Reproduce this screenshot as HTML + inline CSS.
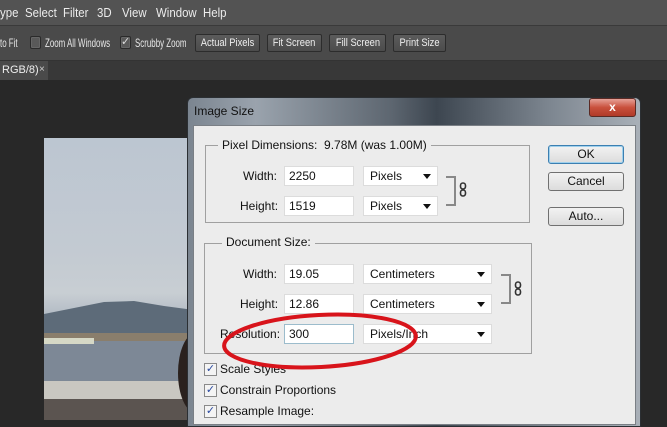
<!DOCTYPE html>
<html><head><meta charset="utf-8">
<style>
*{margin:0;padding:0;box-sizing:border-box}
body{width:667px;height:420px;overflow:hidden;background:#282828;position:relative;font-family:"Liberation Sans",sans-serif}
.a{position:absolute}
.menu{left:0;top:0;width:667px;height:26px;background:#535353;border-bottom:1px solid #3a3a3a}
.menu span{position:absolute;top:5px;color:#ececec;font-size:13px;transform:scaleX(.88);transform-origin:left}
.tool{left:0;top:26px;width:667px;height:35px;background:#4a4a4a;border-bottom:1px solid #333}
.tt{color:#e6e6e6;font-size:12px;position:absolute;top:10px;transform:scaleX(.66);transform-origin:left;white-space:nowrap}
.cb{position:absolute;top:10px;width:11px;height:13px;border:1px solid #2a2a2a;background:#595959;border-radius:2px;box-shadow:0 0 0 1px #666 inset}
.btn{position:absolute;top:8px;height:18px;border:1px solid #2c2c2c;border-radius:2px;background:linear-gradient(#5c5c5c,#4c4c4c);color:#eee;font-size:11px;text-align:center;line-height:16px;white-space:nowrap;overflow:hidden}
.btn i{font-style:normal;display:inline-block;transform:scaleX(.85)}
.tabs{left:0;top:61px;width:667px;height:19px;background:#383838}
.tab{left:0;top:61px;width:48px;height:19px;background:#4a4a4a;color:#eee;font-size:11px;padding:3px 0 0 2px}
.photo{left:44px;top:138px;width:150px;height:282px;background:linear-gradient(#bcc6d1 0%,#c3cad2 40%,#c8ced3 55%,#aab4bf 66%)}
.dlg{left:187px;top:97px;width:454px;height:330px;border-radius:6px 6px 0 0;background:linear-gradient(90deg,#7b8590 0%,#9aa3ad 15%,#5d6670 45%,#3d4650 55%,#7d8690 80%,#a9b0b8 100%);border:1px solid #2b2f33}
.client{left:193px;top:125px;width:443px;height:300px;background:#ececec;border:1px solid #7a7f85}
.l{position:absolute;font-size:12px;color:#111}
.grp{position:absolute;border:1px solid #a0a0a0}
.in{position:absolute;height:20px;background:#fff;border:1px solid #dcdcdc;font-size:12px;padding:2px 0 0 4px;color:#111}
.dd{position:absolute;height:20px;background:#fff;border:1px solid #dcdcdc;font-size:12px;padding:2px 0 0 6px;color:#111}
.dd:after{content:"";position:absolute;right:6px;top:7px;border:4px solid transparent;border-top:5px solid #111}
.br{position:absolute;width:10px;border:2px solid #888;border-left:none}
.wb{position:absolute;left:548px;width:76px;height:19px;border:1px solid #707070;border-radius:3px;background:linear-gradient(#f2f2f2,#dcdcdc);font-size:12px;text-align:center;line-height:17px;color:#111}
.ck{position:absolute;left:204px;width:13px;height:13px;border:1px solid #8a8a8a;background:#f4f4f4;color:#2b4aa0;font-size:11px;line-height:11px;text-align:center}
</style></head><body>
<div class="a menu">
<span style="left:0">ype</span><span style="left:25px">Select</span><span style="left:63px">Filter</span><span style="left:97px">3D</span><span style="left:122px">View</span><span style="left:156px">Window</span><span style="left:203px">Help</span>
</div>
<div class="a tool">
<span class="tt" style="left:0">to Fit</span>
<div class="cb" style="left:30px"></div><span class="tt" style="left:45px">Zoom All Windows</span>
<div class="cb" style="left:120px;color:#ddd;font-size:11px;line-height:11px;text-align:center">✓</div><span class="tt" style="left:135px">Scrubby Zoom</span>
<div class="btn" style="left:195px;width:65px"><i>Actual Pixels</i></div>
<div class="btn" style="left:267px;width:55px"><i>Fit Screen</i></div>
<div class="btn" style="left:329px;width:57px"><i>Fill Screen</i></div>
<div class="btn" style="left:393px;width:53px"><i>Print Size</i></div>
</div>
<div class="a tabs"></div>
<div class="a tab">RGB/8) <span style="position:absolute;left:39px;font-size:10px;color:#ccc;top:3px">×</span></div>
<div class="a photo">
<svg width="150" height="282" style="position:absolute;left:0;top:0">
<path d="M0 176 L30 170 L60 164 L90 163 L120 168 L150 172 L150 196 L0 196Z" fill="#5d6b79"/>
<rect x="0" y="195" width="150" height="8" fill="#8a7e6c"/>
<rect x="0" y="203" width="150" height="40" fill="#7d8896"/>
<rect x="0" y="200" width="50" height="6" fill="#d6d8c6"/>
<rect x="0" y="243" width="150" height="18" fill="#c9c7c1"/>
<rect x="0" y="261" width="150" height="21" fill="#5b5450"/>
<ellipse cx="152" cy="235" rx="18" ry="40" fill="#2a211e"/>
</svg>
</div>
<div class="a dlg"></div>
<div class="a" style="left:194px;top:104px;font-size:12px;color:#111">Image Size</div>
<div class="a" style="left:589px;top:98px;width:47px;height:19px;border:1px solid #5a2a24;border-radius:3px;background:linear-gradient(#e6a197,#c9503c 50%,#b03a28);color:#fff;font-weight:bold;font-size:12px;text-align:center;line-height:17px">x</div>
<div class="a client"></div>

<div class="grp" style="left:205px;top:145px;width:325px;height:78px"></div>
<div class="l" style="left:218px;top:138px;background:#ececec;padding:0 4px">Pixel Dimensions:&nbsp; 9.78M (was 1.00M)</div>
<div class="l" style="left:243px;top:169px">Width:</div>
<div class="in" style="left:284px;top:166px;width:70px">2250</div>
<div class="dd" style="left:363px;top:166px;width:75px">Pixels</div>
<div class="l" style="left:240px;top:199px">Height:</div>
<div class="in" style="left:284px;top:196px;width:70px">1519</div>
<div class="dd" style="left:363px;top:196px;width:75px">Pixels</div>
<div class="br" style="left:446px;top:176px;height:30px"></div>
<svg class="a" style="left:459px;top:182px" width="8" height="15"><rect x="1.5" y="1" width="5" height="6" rx="2.5" fill="none" stroke="#333" stroke-width="1.6"/><rect x="1.5" y="8" width="5" height="6" rx="2.5" fill="none" stroke="#333" stroke-width="1.6"/></svg>

<div class="grp" style="left:204px;top:243px;width:328px;height:111px"></div>
<div class="l" style="left:222px;top:235px;background:#ececec;padding:0 4px">Document Size:</div>
<div class="l" style="left:243px;top:267px">Width:</div>
<div class="in" style="left:284px;top:264px;width:70px">19.05</div>
<div class="dd" style="left:363px;top:264px;width:129px">Centimeters</div>
<div class="l" style="left:240px;top:297px">Height:</div>
<div class="in" style="left:284px;top:294px;width:70px">12.86</div>
<div class="dd" style="left:363px;top:294px;width:129px">Centimeters</div>
<div class="l" style="left:220px;top:327px">Resolution:</div>
<div class="in" style="left:284px;top:324px;width:70px;border-color:#9cbccc">300</div>
<div class="dd" style="left:363px;top:324px;width:129px">Pixels/Inch</div>
<div class="br" style="left:501px;top:274px;height:30px"></div>
<svg class="a" style="left:514px;top:281px" width="8" height="15"><rect x="1.5" y="1" width="5" height="6" rx="2.5" fill="none" stroke="#333" stroke-width="1.6"/><rect x="1.5" y="8" width="5" height="6" rx="2.5" fill="none" stroke="#333" stroke-width="1.6"/></svg>

<div class="wb" style="top:145px;border-color:#3c7fb1;box-shadow:0 0 0 1px #9fd0ec inset">OK</div>
<div class="wb" style="top:172px">Cancel</div>
<div class="wb" style="top:207px">Auto...</div>

<div class="ck" style="top:363px">✓</div><div class="l" style="left:220px;top:362px">Scale Styles</div>
<div class="ck" style="top:384px">✓</div><div class="l" style="left:220px;top:383px">Constrain Proportions</div>
<div class="ck" style="top:405px">✓</div><div class="l" style="left:220px;top:404px">Resample Image:</div>

<svg class="a" style="left:0;top:0" width="667" height="420">
<ellipse cx="320" cy="341" rx="96" ry="26" transform="rotate(-3 320 341)" fill="none" stroke="#d8141b" stroke-width="4"/>
</svg>
</body></html>
